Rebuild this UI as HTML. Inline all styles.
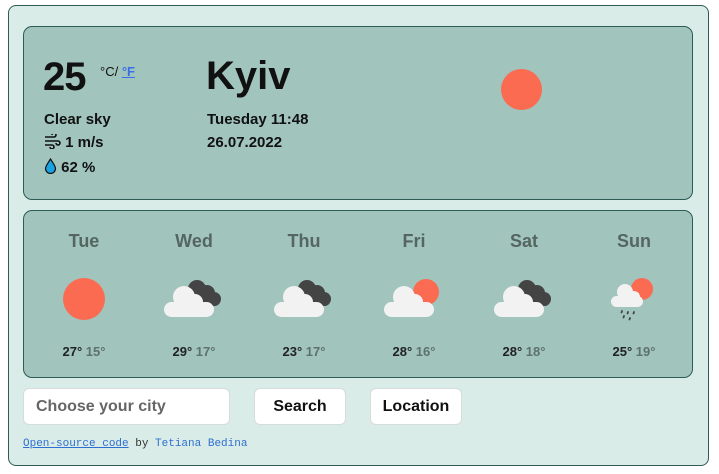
<!DOCTYPE html>
<html><head><meta charset="utf-8"><style>
*{box-sizing:border-box;margin:0;padding:0}
body{width:719px;height:474px;background:#fff;font-family:"Liberation Sans",sans-serif;position:relative;overflow:hidden}
.outer{position:absolute;left:8px;top:5px;width:701px;height:461px;background:#d9ece7;border:1px solid #2f5a55;border-radius:8px}
.panel{position:absolute;background:#a1c5bd;border:1px solid #2f5a55;border-radius:9px}
.b{font-weight:bold;color:#111}
.abs{position:absolute}
.day{position:absolute;top:0;width:110px;text-align:center}
.dn{position:absolute;top:20px;width:110px;text-align:center;font-size:18px;font-weight:bold;color:#556560}
.ic{position:absolute;top:64px;left:23px}
.tt{position:absolute;top:133px;width:110px;text-align:center;font-size:13px;font-weight:bold;color:#222}
.tt span{color:#5e716c}
.btn{position:absolute;top:388px;height:37px;background:#fff;border:1px solid #d6dcda;border-radius:6px;font-weight:bold;font-size:16px;color:#111;text-align:center;line-height:36px}
</style></head><body>
<div class="outer"></div>
<div class="panel" style="left:23px;top:26px;width:670px;height:174px"></div>
<div class="abs b" style="left:43px;top:55px;font-size:40px;letter-spacing:-1px">25</div>
<div class="abs" style="left:100px;top:64px;font-size:13px;color:#111">°C/ <span style="color:#3a6ee8;text-decoration:underline;font-weight:bold">°F</span></div>
<div class="abs b" style="left:206px;top:54px;font-size:40px">Kyiv</div>
<div class="abs b" style="left:44px;top:111px;font-size:15px">Clear sky</div>
<div class="abs b" style="left:44px;top:134px;font-size:15px"><svg width="17" height="15" viewBox="0 0 17 15" style="vertical-align:-2px"><path d="M1 3h9a2 2 0 1 0-2-2M1 7h13a2 2 0 1 1-2 2M1 11h7a2 2 0 1 1-2 2" fill="none" stroke="#111" stroke-width="1.6"/></svg> 1 m/s</div>
<div class="abs b" style="left:44px;top:158px;font-size:15px"><svg width="13" height="16" viewBox="0 0 13 16" style="vertical-align:-2px"><path d="M6.5 1C4 5 1.5 8 1.5 10.5a5 5 0 0 0 10 0C11.5 8 9 5 6.5 1z" fill="#19a3e0" stroke="#111" stroke-width="1.2"/></svg> 62 %</div>
<div class="abs b" style="left:207px;top:111px;font-size:15px">Tuesday 11:48</div>
<div class="abs b" style="left:207px;top:134px;font-size:15px">26.07.2022</div>
<div class="abs" style="left:501px;top:69px;width:41px;height:41px;border-radius:50%;background:#fa6b52"></div>

<div class="panel" style="left:23px;top:210px;width:670px;height:168px">
 <div style="position:absolute;left:5px;top:0">
  <div class="day" style="left:0"><div class="dn">Tue</div><div class="abs" style="left:34px;top:67px;width:42px;height:42px;border-radius:50%;background:#fa6b52"></div><div class="tt">27° <span>15°</span></div></div>
  <div class="day" style="left:110px"><div class="dn">Wed</div><svg class="ic" width="62" height="44" viewBox="0 0 62 44"><g fill="#444"><circle cx="35" cy="14" r="9"/><circle cx="45" cy="18" r="8"/><circle cx="52" cy="24" r="7"/><rect x="30" y="20" width="28" height="11" rx="5"/></g><g fill="#f2f2f2"><circle cx="22" cy="22" r="11"/><circle cx="33" cy="27" r="8"/><rect x="2" y="27" width="50" height="15" rx="7.5"/></g></svg><div class="tt">29° <span>17°</span></div></div>
  <div class="day" style="left:220px"><div class="dn">Thu</div><svg class="ic" width="62" height="44" viewBox="0 0 62 44"><g fill="#444"><circle cx="35" cy="14" r="9"/><circle cx="45" cy="18" r="8"/><circle cx="52" cy="24" r="7"/><rect x="30" y="20" width="28" height="11" rx="5"/></g><g fill="#f2f2f2"><circle cx="22" cy="22" r="11"/><circle cx="33" cy="27" r="8"/><rect x="2" y="27" width="50" height="15" rx="7.5"/></g></svg><div class="tt">23° <span>17°</span></div></div>
  <div class="day" style="left:330px"><div class="dn">Fri</div><svg class="ic" width="62" height="44" viewBox="0 0 62 44"><circle cx="44" cy="17" r="13" fill="#fa6b52"/><g fill="#f2f2f2"><circle cx="22" cy="22" r="11"/><circle cx="33" cy="27" r="8"/><rect x="2" y="27" width="50" height="15" rx="7.5"/></g></svg><div class="tt">28° <span>16°</span></div></div>
  <div class="day" style="left:440px"><div class="dn">Sat</div><svg class="ic" width="62" height="44" viewBox="0 0 62 44"><g fill="#444"><circle cx="35" cy="14" r="9"/><circle cx="45" cy="18" r="8"/><circle cx="52" cy="24" r="7"/><rect x="30" y="20" width="28" height="11" rx="5"/></g><g fill="#f2f2f2"><circle cx="22" cy="22" r="11"/><circle cx="33" cy="27" r="8"/><rect x="2" y="27" width="50" height="15" rx="7.5"/></g></svg><div class="tt">28° <span>18°</span></div></div>
  <div class="day" style="left:550px"><div class="dn">Sun</div><svg class="ic" width="62" height="50" viewBox="0 0 62 50" style="top:64px"><circle cx="40" cy="14" r="11" fill="#fa6b52"/><g fill="#f2f2f2"><circle cx="23" cy="17" r="8"/><circle cx="32" cy="22" r="6"/><rect x="9" y="21" width="32" height="11" rx="5.5"/></g><g stroke="#444" stroke-width="1.8" stroke-linecap="round"><path d="M20 36l-.5 1.5M26 37l-.5 1.5M32 37l-.5 1.5M22 41l-.5 1.5M28 43l-.5 1.5"/></g></svg><div class="tt">25° <span>19°</span></div></div>
 </div>
</div>

<div class="abs" style="left:23px;top:388px;width:207px;height:37px;background:#fff;border:1px solid #d6dcda;border-radius:6px;font-weight:bold;font-size:16px;color:#666;line-height:36px;padding-left:12px">Choose your city</div>
<div class="btn" style="left:254px;width:92px">Search</div>
<div class="btn" style="left:370px;width:92px">Location</div>
<div class="abs" style="left:23px;top:438px;font-family:'Liberation Mono',monospace;font-size:11px;color:#333"><span style="color:#2f6fd0;text-decoration:underline">Open-source code</span> by <span style="color:#2f6fd0">Tetiana Bedina</span></div>
</body></html>
